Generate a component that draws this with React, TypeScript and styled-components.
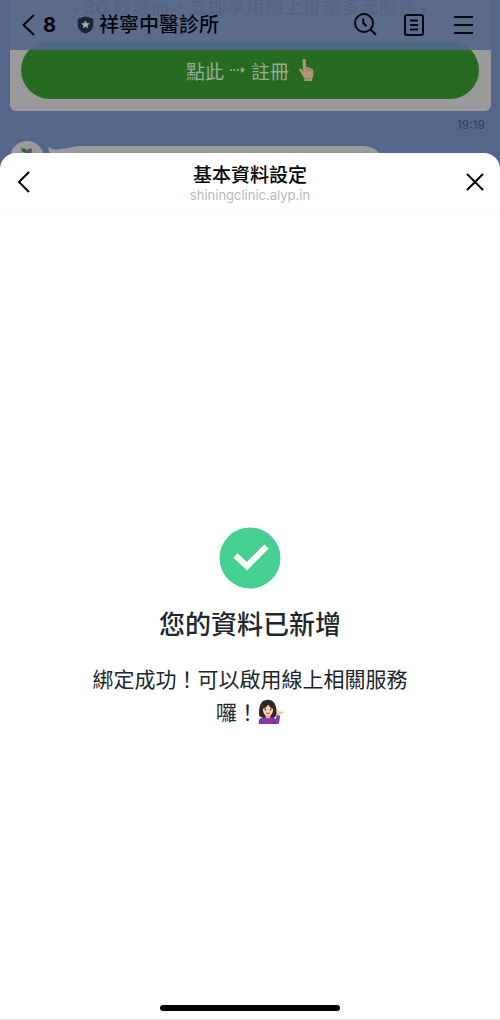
import React from "react";
import styled, { createGlobalStyle } from "styled-components";

const GlobalStyle = createGlobalStyle`
  *, *::before, *::after { box-sizing: border-box; }
  body {
    margin: 0;
    background: #ffffff;
    font-family: Inter, "Noto Sans CJK TC", sans-serif;
  }
`;

const Page = styled.div`
  display: flex;
  flex-direction: column;
  min-height: 100vh;
`;

const Chat = styled.div`
  position: relative;
  height: 173px;
  overflow: hidden;
  background: #54678a;
  color: #04060c;
`;

const ChatHeader = styled.header`
  position: absolute;
  top: 0;
  left: 0;
  right: 0;
  height: 50px;
  padding: 0 25px 0 20px;
  display: flex;
  align-items: center;
  background: rgba(84, 103, 138, 0.9);
`;

const IconButton = styled.button`
  display: flex;
  align-items: center;
  padding: 0;
  border: 0;
  background: none;
  color: inherit;
  font: inherit;
  cursor: pointer;
`;

const BackButton = styled(IconButton)`
  gap: 6px;
  font-size: 20px;
  font-weight: 700;
`;

const ChatName = styled.h1`
  flex: 1;
  display: flex;
  align-items: center;
  gap: 5px;
  margin: 0 0 0 21px;
  font-size: 20px;
  font-weight: 500;
  line-height: 24px;
`;

const Actions = styled.div`
  display: flex;
  align-items: center;
  gap: 25px;
`;

const MessageCard = styled.article`
  margin: 0 9px 0 10px;
  padding: 0 12px 12px 11px;
  border-radius: 0 0 6px 6px;
  background: #9a9a9a;
  text-align: center;
`;

const CardText = styled.p`
  margin: 0 0 25px;
  font-size: 19px;
  font-weight: 700;
  line-height: 16px;
  white-space: nowrap;
  color: #505358;
`;

const Marker = styled.span`
  font-size: 12px;
  line-height: 0;
`;

const RegisterButton = styled.button`
  display: flex;
  align-items: center;
  justify-content: center;
  gap: 6px;
  width: 100%;
  height: 58px;
  padding: 0;
  border: 0;
  border-radius: 29px;
  background: #276b22;
  color: #9aaa98;
  font: 400 19px "Noto Sans CJK TC", sans-serif;
  cursor: pointer;
`;

const Time = styled.time`
  display: block;
  margin: 7px 15px 0;
  text-align: right;
  font-size: 12px;
  line-height: 14px;
  color: #333f55;
`;

const IncomingRow = styled.div`
  display: flex;
  align-items: flex-start;
  padding: 9px 10px 0;
`;

const Avatar = styled.div`
  display: flex;
  justify-content: center;
  width: 34px;
  height: 34px;
  padding-top: 5px;
  border-radius: 50%;
  background: #9a9a9a;
`;

const Tail = styled.svg`
  margin: 6px -18px 0 4px;
`;

const Bubble = styled.div`
  flex: 0 1 326px;
  height: 40px;
  margin-top: 5px;
  border-radius: 20px;
  background: #9a9a9a;
`;

const Sheet = styled.section`
  position: relative;
  flex: 1;
  display: flex;
  flex-direction: column;
  margin-top: -20px;
  border-bottom: 1px solid #e4e4e4;
  border-radius: 16px 16px 0 0;
  background: #ffffff;
`;

const SheetHeader = styled.header`
  display: flex;
  align-items: center;
  justify-content: space-between;
  height: 59px;
  padding: 0 16px;
  border-bottom: 1px solid #fafafa;
  color: #000000;
`;

const SheetHeading = styled.div`
  text-align: center;
`;

const SheetTitle = styled.h2`
  margin: 0;
  font-size: 19px;
  font-weight: 500;
  line-height: 26px;
`;

const SheetUrl = styled.p`
  margin: 0;
  font-size: 13px;
  line-height: 12px;
  color: #b8b8b8;
`;

const Result = styled.main`
  flex: 1;
  display: flex;
  flex-direction: column;
  align-items: center;
  justify-content: center;
  padding: 38px 24px 0;
  text-align: center;
  color: #1c262b;
`;

const ResultTitle = styled.h3`
  margin: 18px 0 0;
  font-size: 26px;
  font-weight: 500;
  line-height: 36px;
`;

const ResultText = styled.p`
  max-width: 328px;
  margin: 20px 0 0;
  font-size: 21px;
  line-height: 33px;
`;

const InlineEmoji = styled.svg`
  vertical-align: -4px;
`;

const HomeIndicator = styled.div`
  align-self: center;
  width: 36%;
  height: 6px;
  margin-bottom: 8px;
  border-radius: 3px;
  background: #000000;
`;

const PointingHand = () => (
  <svg width="19" height="24" viewBox="0 0 19 24" role="img" aria-label="👆🏻">
    <path
      d="M7.600 2.200C7.600.500 10.600.500 10.700 2.200l.4 7.300c1-.7 2.200-.4 2.600.4 1-.5 1.900-.1 2.200.7 1.500-.2 2.400.8 2.400 2.200v4.200c0 1.500-.8 2.600-1.200 3.500V23H9.400v-2.600L4.500 12.600c-.9-1.700.7-2.900 2-1.500l1.600 1.800z"
      fill="#b3957c"
    />
    <path d="M11.200 10l-.5 3.200 2 1M13.700 10.500v2.800M15.900 11.200v2.400M9.800 20.600l6.500.1" fill="none" stroke="#86664f" strokeWidth=".7" />
  </svg>
);

const TippingHandWoman = () => (
  <InlineEmoji width="26" height="25" viewBox="0 0 26 25" role="img" aria-label="💁🏻‍♀️">
    <path d="M1.300 17C.3 10 1.800.7 9.600.7c7.800 0 9.800 7.800 8.700 16.300l-3 2H5z" fill="#302725" />
    <path d="M8 14h4.500v5.200L10 21l-2.500-2z" fill="#e2ad88" />
    <path d="M4.900 9.700c2.600-.8 4.200-2.300 5.300-4.300 1.200 2.300 2.700 3.500 4.800 4.300.2 4.200-1.900 7.500-5 7.500-3.100 0-5.200-3.300-5.100-7.500z" fill="#fad3b3" />
    <path d="M6 9.300l2-.5M12 8.800l2 .5" stroke="#4b352d" strokeWidth=".7" />
    <circle cx="7.400" cy="10.700" r=".8" fill="#382a27" />
    <circle cx="12.600" cy="10.700" r=".8" fill="#382a27" />
    <path d="M7.900 13.500q2.100.6 4.300 0-.6 2-2.100 2t-2.200-2z" fill="#d4515b" />
    <path d="M.8 25v-3.200c0-2.600 3.400-3.300 6.200-3.600q3 2.400 6 0c2.200.2 3.800.8 4.700 1.700l1.300-4.200 3.300 1L20.800 25z" fill="#833baa" />
    <path d="M3.800 22.300V25M16.300 21.800l-.5 3.200" stroke="#5e2380" strokeWidth=".8" />
    <path d="M18.800 15.800l.8-2.500c-1-.7-1.600-1.700-.8-1.800l2.500 1 3.900.2c1.200.3.6 1-.3 1.200l-2.600 1.100-.7 1.700z" fill="#f2c19a" />
  </InlineEmoji>
);

export default function App() {
  return (
    <>
      <GlobalStyle />
      <Page>
        <Chat>
          <MessageCard>
            <CardText>
              <Marker>▾</Marker> 30 秒註冊，立即享用線上掛號多元服務 <Marker>▾</Marker>
            </CardText>
            <RegisterButton type="button">
              <span>點此</span>
              <svg width="15" height="8" viewBox="0 0 15 8" role="img" aria-label="⤑">
                <path d="M0 4h2M3.500 4h2M7 4h2M10.500 4h2" stroke="currentColor" strokeWidth="1.500" />
                <path d="M11.500 .8L15 4l-3.500 3.200z" fill="currentColor" />
              </svg>
              <span>註冊</span>
              <PointingHand />
            </RegisterButton>
          </MessageCard>
          <Time>19:19</Time>
          <IncomingRow>
            <Avatar>
              <svg width="14" height="14" viewBox="0 0 14 14" aria-hidden="true">
                <path d="M1 2l5 1v4L2.500 6z" fill="#1e6a34" />
                <path d="M7 5l1-2 3-1 1 2-1 4-4 2z" fill="#75437a" />
                <path d="M6 3l1 9" stroke="#1e6a34" />
              </svg>
            </Avatar>
            <Tail width="28" height="16" viewBox="0 0 28 16" aria-hidden="true">
              <path d="M0 0q6 4 12 2l16-2v16H9Q2 10 0 0z" fill="#9a9a9a" />
            </Tail>
            <Bubble />
          </IncomingRow>
          <ChatHeader>
            <BackButton type="button" aria-label="返回，8">
              <svg width="17" height="24" viewBox="0 0 17 24" fill="none" stroke="currentColor" strokeWidth="2" aria-hidden="true">
                <path d="M14 2L3.500 12 14 22" />
              </svg>
              <span>8</span>
            </BackButton>
            <ChatName>
              <svg width="17" height="18" viewBox="0 0 17 18" aria-hidden="true">
                <path d="M8.500 .5l7 2q.8.3.8 1.200V9c0 4.500-3.500 7.200-7.800 8.600C4.200 16.200.7 13.500.7 9V3.700q0-.9.8-1.200z" fill="#1b2438" />
                <path d="M8.500 4.300l1.300 2.800 3 .3-2.300 2 .7 3-2.700-1.600-2.700 1.600.7-3-2.300-2 3-.3z" fill="#a8a8a8" />
              </svg>
              祥寧中醫診所
            </ChatName>
            <Actions>
              <IconButton type="button" aria-label="搜尋">
                <svg width="24" height="24" viewBox="0 0 24 24" fill="none" stroke="currentColor" strokeWidth="2">
                  <circle cx="11" cy="10" r="9" />
                  <path d="M17.200 16.200L23 21.800M10.300 5.500V10L13.500 13.200" />
                </svg>
              </IconButton>
              <IconButton type="button" aria-label="記事本">
                <svg width="24" height="24" viewBox="0 0 24 24" fill="none" stroke="currentColor" strokeWidth="2">
                  <rect x="3" y="2" width="18" height="20" rx="2" />
                  <path d="M8 7.500h8M8 12h8M8 16.500h8" />
                </svg>
              </IconButton>
              <IconButton type="button" aria-label="選單">
                <svg width="24" height="24" viewBox="0 0 24 24" fill="none" stroke="currentColor" strokeWidth="2">
                  <path d="M3 4h19M3 12h19M3 20h19" />
                </svg>
              </IconButton>
            </Actions>
          </ChatHeader>
        </Chat>

        <Sheet>
          <SheetHeader>
            <IconButton type="button" aria-label="返回">
              <svg width="18" height="24" viewBox="0 0 18 24" fill="none" stroke="currentColor" strokeWidth="2">
                <path d="M13 2L3 12l10 10" />
              </svg>
            </IconButton>
            <SheetHeading>
              <SheetTitle>基本資料設定</SheetTitle>
              <SheetUrl>shiningclinic.alyp.in</SheetUrl>
            </SheetHeading>
            <IconButton type="button" aria-label="關閉">
              <svg width="18" height="18" viewBox="0 0 18 18" fill="none" stroke="currentColor" strokeWidth="2">
                <path d="M1 1l16 16M17 1L1 17" />
              </svg>
            </IconButton>
          </SheetHeader>
          <Result>
            <svg width="62" height="62" viewBox="0 0 62 62" aria-hidden="true">
              <circle cx="31" cy="31" r="30.500" fill="#45cf91" />
              <path d="M16.500 28.500L28 39.200 47.500 19.500" fill="none" stroke="#ffffff" strokeWidth="6" />
            </svg>
            <ResultTitle>您的資料已新增</ResultTitle>
            <ResultText>
              綁定成功！可以啟用線上相關服務囉！
              <TippingHandWoman />
            </ResultText>
          </Result>
          <HomeIndicator />
        </Sheet>
      </Page>
    </>
  );
}
